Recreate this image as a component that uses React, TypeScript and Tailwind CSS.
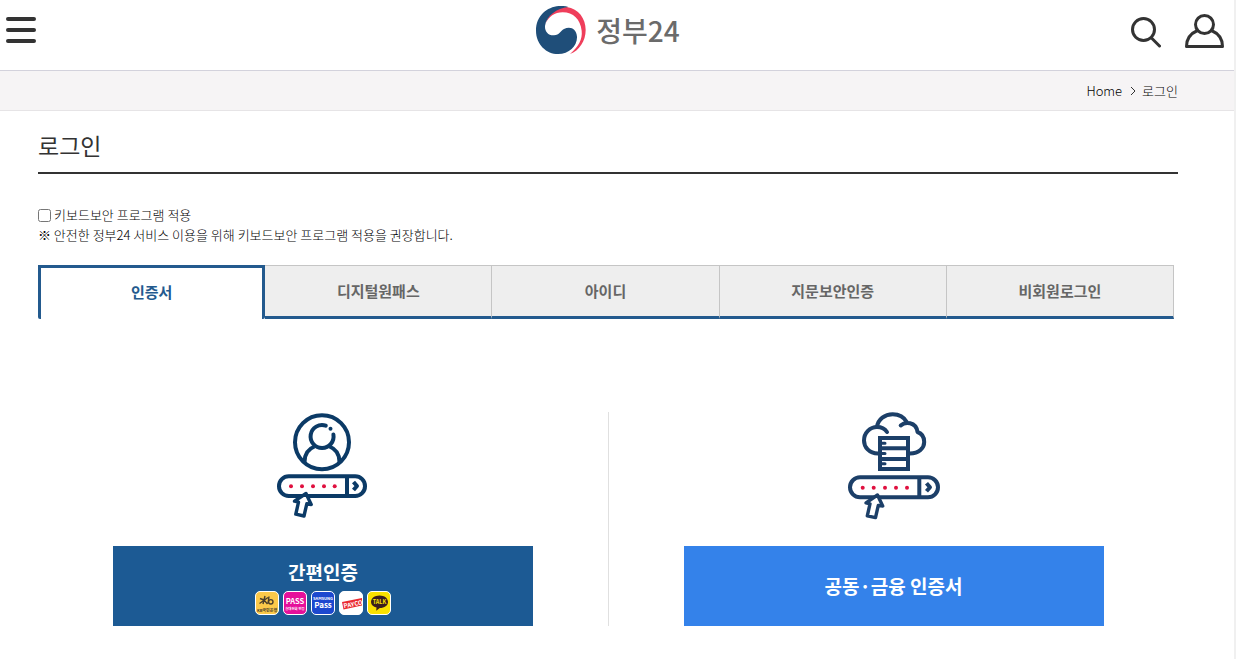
import { useState } from "react";

const TABS = [
  { id: "cert", label: "인증서" },
  { id: "onepass", label: "디지털원패스" },
  { id: "id", label: "아이디" },
  { id: "finger", label: "지문보안인증" },
  { id: "guest", label: "비회원로그인" },
];

function Logo() {
  return (
    <a href="#" className="flex items-center gap-2.5">
      <svg width="50" height="48" viewBox="0 0 150 144" aria-hidden="true">
        <path
          d="M28 54C36 22 62 3 92 3C128 8 149 38 149 72C149 105 130 134 102 144C127 122 140 100 137 74C133 40 112 19 80 19C56 19 38 32 28 54Z"
          fill="#ef3e5b"
        />
        <path
          d="M97 3C55 -10 0 16 0 74C0 116 32 144 66 144C100 144 124 120 123 92C121 68 103 60 84 69C73 75 71 87 54 88C36 89 26 76 27 60C31 30 62 6 97 3Z"
          fill="#1f4e79"
        />
      </svg>
      <span className="text-[28px] leading-[48px] font-medium text-[#6b6b6b]">정부24</span>
    </a>
  );
}

function Header() {
  return (
    <header className="grid h-[71px] grid-cols-[1fr_auto_1fr] items-start border-b border-[#d3d2dc] pt-1.5 pr-6 pl-1.5">
      <button type="button" aria-label="전체메뉴" className="mt-[11px] flex w-[30px] flex-col gap-[7px]">
        <span className="h-1 w-full rounded-full bg-[#333]" />
        <span className="h-1 w-full rounded-full bg-[#333]" />
        <span className="h-1 w-full rounded-full bg-[#333]" />
      </button>
      <Logo />
      <div className="mt-2 -mr-3.5 flex items-start justify-end gap-6">
        <button type="button" aria-label="검색">
          <svg width="30" height="34" viewBox="0 0 30 34" fill="none" stroke="#333" strokeWidth="3">
            <circle cx="12.5" cy="15.5" r="11" />
            <path d="M20.5 24L28.5 32" strokeLinecap="round" />
          </svg>
        </button>
        <button type="button" aria-label="로그인">
          <svg width="39" height="34" viewBox="0 0 39 34" fill="none" stroke="#333" strokeWidth="3">
            <circle cx="19.5" cy="10.5" r="9" />
            <path d="M12.5 16.5C5.5 19.5 1.5 25 1.5 32.5H37.5C37.5 25 33.5 19.5 26.5 16.5" strokeLinejoin="round" />
          </svg>
        </button>
      </div>
    </header>
  );
}

function SimpleAuthIcon() {
  return (
    <svg width="92" height="108" viewBox="0 0 92 108" fill="none" stroke="#0b3a66" strokeWidth="4" aria-hidden="true">
      <circle cx="45" cy="30.3" r="27" />
      <path d="M48.8 13.6A11.5 11.5 0 1 0 56.4 22.5" strokeLinecap="round" />
      <circle cx="53.5" cy="16.8" r="2" fill="#0b3a66" stroke="none" />
      <path d="M37.5 34.5C31 37 27.5 42 27.5 50" />
      <path d="M52.5 34.5C59 37 62.5 42 62.5 50" />
      <rect x="2" y="64.3" width="86" height="19.7" rx="9.8" />
      <path d="M70 64V84" />
      <path d="M76.5 70L80 74L76.5 78" strokeLinejoin="round" />
      <Dots xs={[14, 25, 36, 47, 57.7]} y={74.3} />
      <path d="M29 81.5L34.2 92.5L29.8 91.8L27 104L18.8 102.2L21.5 90.2L17.5 89.2Z" fill="#fff" strokeWidth="3.4" strokeLinejoin="round" />
    </svg>
  );
}

function JointCertIcon() {
  return (
    <svg width="92" height="108" viewBox="0 0 92 108" fill="none" stroke="#1c3f68" strokeWidth="4" aria-hidden="true">
      <path d="M30 41.5C21 41.5 16 35 16 28.5C16 21 22 15 29 15C33 15 37 17 39 20" strokeLinecap="round" />
      <path d="M29 15C30 7 37 2.2 44.7 2.2C51 2.2 56 5 58.7 10" />
      <path d="M52.7 13.5C57 9.5 68 9.5 69.5 20C74 21.5 76.2 25 76.2 30C76.2 36 71 41.5 62 41.5" strokeLinecap="round" strokeLinejoin="round" />
      <rect x="32" y="26" width="28" height="31" />
      <path d="M32 36.3H60M32 47H60" />
      <path d="M33 31.3H37M33 41.5H37M33 51.7H37" strokeWidth="3" strokeLinecap="round" />
      <rect x="2" y="65.3" width="88" height="20" rx="10" />
      <path d="M71.3 65V85" />
      <path d="M78.5 71.3L82 75.3L78.5 79.3" strokeLinejoin="round" />
      <Dots xs={[14.7, 25.7, 37, 48, 59]} y={75.7} />
      <path d="M29.5 83L34.7 94L30.3 93.4L27.5 105.6L19.3 103.8L22 91.8L18 90.8Z" fill="#fff" strokeWidth="3.4" strokeLinejoin="round" />
    </svg>
  );
}

function Dots({ xs, y }: { xs: number[]; y: number }) {
  return (
    <g fill="#e0103f" stroke="none">
      {xs.map((x) => (
        <circle key={x} cx={x} cy={y} r="2" />
      ))}
    </g>
  );
}

function ProviderIcons() {
  return (
    <span className="flex gap-1 font-bold">
      <svg width="24" height="24" viewBox="0 0 24 24" aria-hidden="true">
        <rect x="0.5" y="0.5" width="23" height="23" rx="4.5" fill="#fbc94a" stroke="#fff" />
        <path d="M5 7.5L9 9M10 5L8 13M4.5 12.5L13 6.5M9 9L12.5 13M14 5.5L13 12.5" stroke="#4a3f2c" strokeWidth="1.4" fill="none" />
        <circle cx="15.8" cy="10.8" r="2.2" stroke="#4a3f2c" strokeWidth="1.4" fill="none" />
        <text x="12" y="20.5" textAnchor="middle" fontSize="4" fill="#4a3f2c">KB국민은행</text>
      </svg>
      <svg width="24" height="24" viewBox="0 0 24 24" aria-hidden="true">
        <rect x="0.5" y="0.5" width="23" height="23" rx="4.5" fill="#e5109a" stroke="#fff" />
        <text x="12" y="12.5" textAnchor="middle" fontSize="7.5" fill="#fff">PASS</text>
        <text x="12" y="18.5" textAnchor="middle" fontSize="3.4" fill="#fff">휴대전화 인증</text>
      </svg>
      <svg width="24" height="24" viewBox="0 0 24 24" aria-hidden="true">
        <rect x="0.5" y="0.5" width="23" height="23" rx="4.5" fill="#1c48cf" stroke="#fff" />
        <text x="12" y="9" textAnchor="middle" fontSize="4" fill="#fff">SAMSUNG</text>
        <text x="12" y="17" textAnchor="middle" fontSize="8" fill="#fff">Pass</text>
      </svg>
      <svg width="24" height="24" viewBox="0 0 24 24" aria-hidden="true">
        <rect x="0.5" y="0.5" width="23" height="23" rx="4.5" fill="#fff" stroke="#fff" />
        <path d="M3 11L23 7V14.5L4.5 18.5Z" fill="#ea2b31" />
        <text x="14" y="15.5" textAnchor="middle" fontSize="6" fill="#fff" transform="rotate(-11 13 13)">PAYCO</text>
      </svg>
      <svg width="24" height="24" viewBox="0 0 24 24" aria-hidden="true">
        <rect x="0.5" y="0.5" width="23" height="23" rx="4.5" fill="#fae100" stroke="#fff" />
        <path d="M12.5 4.5C17.5 4.5 21 7.3 21 11C21 14.6 17.5 17 12.8 17L9.2 19.8L9.5 16.6C6.2 15.7 4 13.7 4 11C4 7.3 7.6 4.5 12.5 4.5Z" fill="#3b1e1e" />
        <text x="12.5" y="13" textAnchor="middle" fontSize="5.5" fill="#fae100">TALK</text>
      </svg>
    </span>
  );
}

export default function App() {
  const [active, setActive] = useState("cert");
  const [keySecurity, setKeySecurity] = useState(false);

  return (
    <div className="min-h-screen border-r-2 border-[#f0f0f0] bg-white font-['Noto_Sans_CJK_KR',sans-serif] text-[#333]">
      <Header />

      <nav aria-label="현재 위치" className="flex h-10 items-center justify-end border-b border-[#e6e4e6] bg-[#f6f4f5] pr-14 text-[13px] font-light text-black">
        <a href="#">Home</a>
        <svg width="20" height="10" viewBox="0 0 20 10" fill="none" stroke="#333" aria-hidden="true">
          <path d="M9 1L13 5L9 9" />
        </svg>
        <span>로그인</span>
      </nav>

      <main className="pr-14 pb-8 pl-[38px]">
        <h1 className="border-b-2 border-[#333] pt-4 pb-[9px] text-[23px] leading-9 font-normal">로그인</h1>

        <div className="mt-[31px] text-[13px] leading-5 font-light text-black">
          <label className="flex items-center gap-[3px]">
            <input
              type="checkbox"
              checked={keySecurity}
              onChange={(e) => setKeySecurity(e.target.checked)}
              className="size-[13px]"
            />
            키보드보안 프로그램 적용
          </label>
          <p>※ 안전한 정부24 서비스 이용을 위해 키보드보안 프로그램 적용을 권장합니다.</p>
        </div>

        <div role="tablist" className="mt-5 mr-1 grid grid-cols-5">
          {TABS.map(({ id, label }) => (
            <button
              key={id}
              type="button"
              role="tab"
              aria-selected={active === id}
              onClick={() => setActive(id)}
              className={`h-[54px] text-[15px] font-bold ${
                active === id
                  ? "rounded-b-xs border-x-3 border-t-3 border-[#235a8e] bg-white pb-0.5 text-[#235a8e]"
                  : "border-t border-r border-b-3 border-[#c5c5c5] border-b-[#235a8e] bg-[#eee] text-[#666]"
              }`}
            >
              {label}
            </button>
          ))}
        </div>

        <div className="mt-[93px] grid grid-cols-2">
          <section className="flex flex-col items-center gap-[26px]">
            <SimpleAuthIcon />
            <button type="button" className="flex h-20 w-[420px] flex-col items-center bg-[#1c5a94] pt-3 text-[19px] font-bold text-white">
              <span className="mb-[5px] leading-7">간편인증</span>
              <ProviderIcons />
            </button>
          </section>
          <section className="flex flex-col items-center gap-[26px] border-l border-[#e0e0e0]">
            <JointCertIcon />
            <button type="button" className="h-20 w-[420px] bg-[#3482ea] text-[19px] font-bold text-white">
              공동·금융 인증서
            </button>
          </section>
        </div>
      </main>
    </div>
  );
}
